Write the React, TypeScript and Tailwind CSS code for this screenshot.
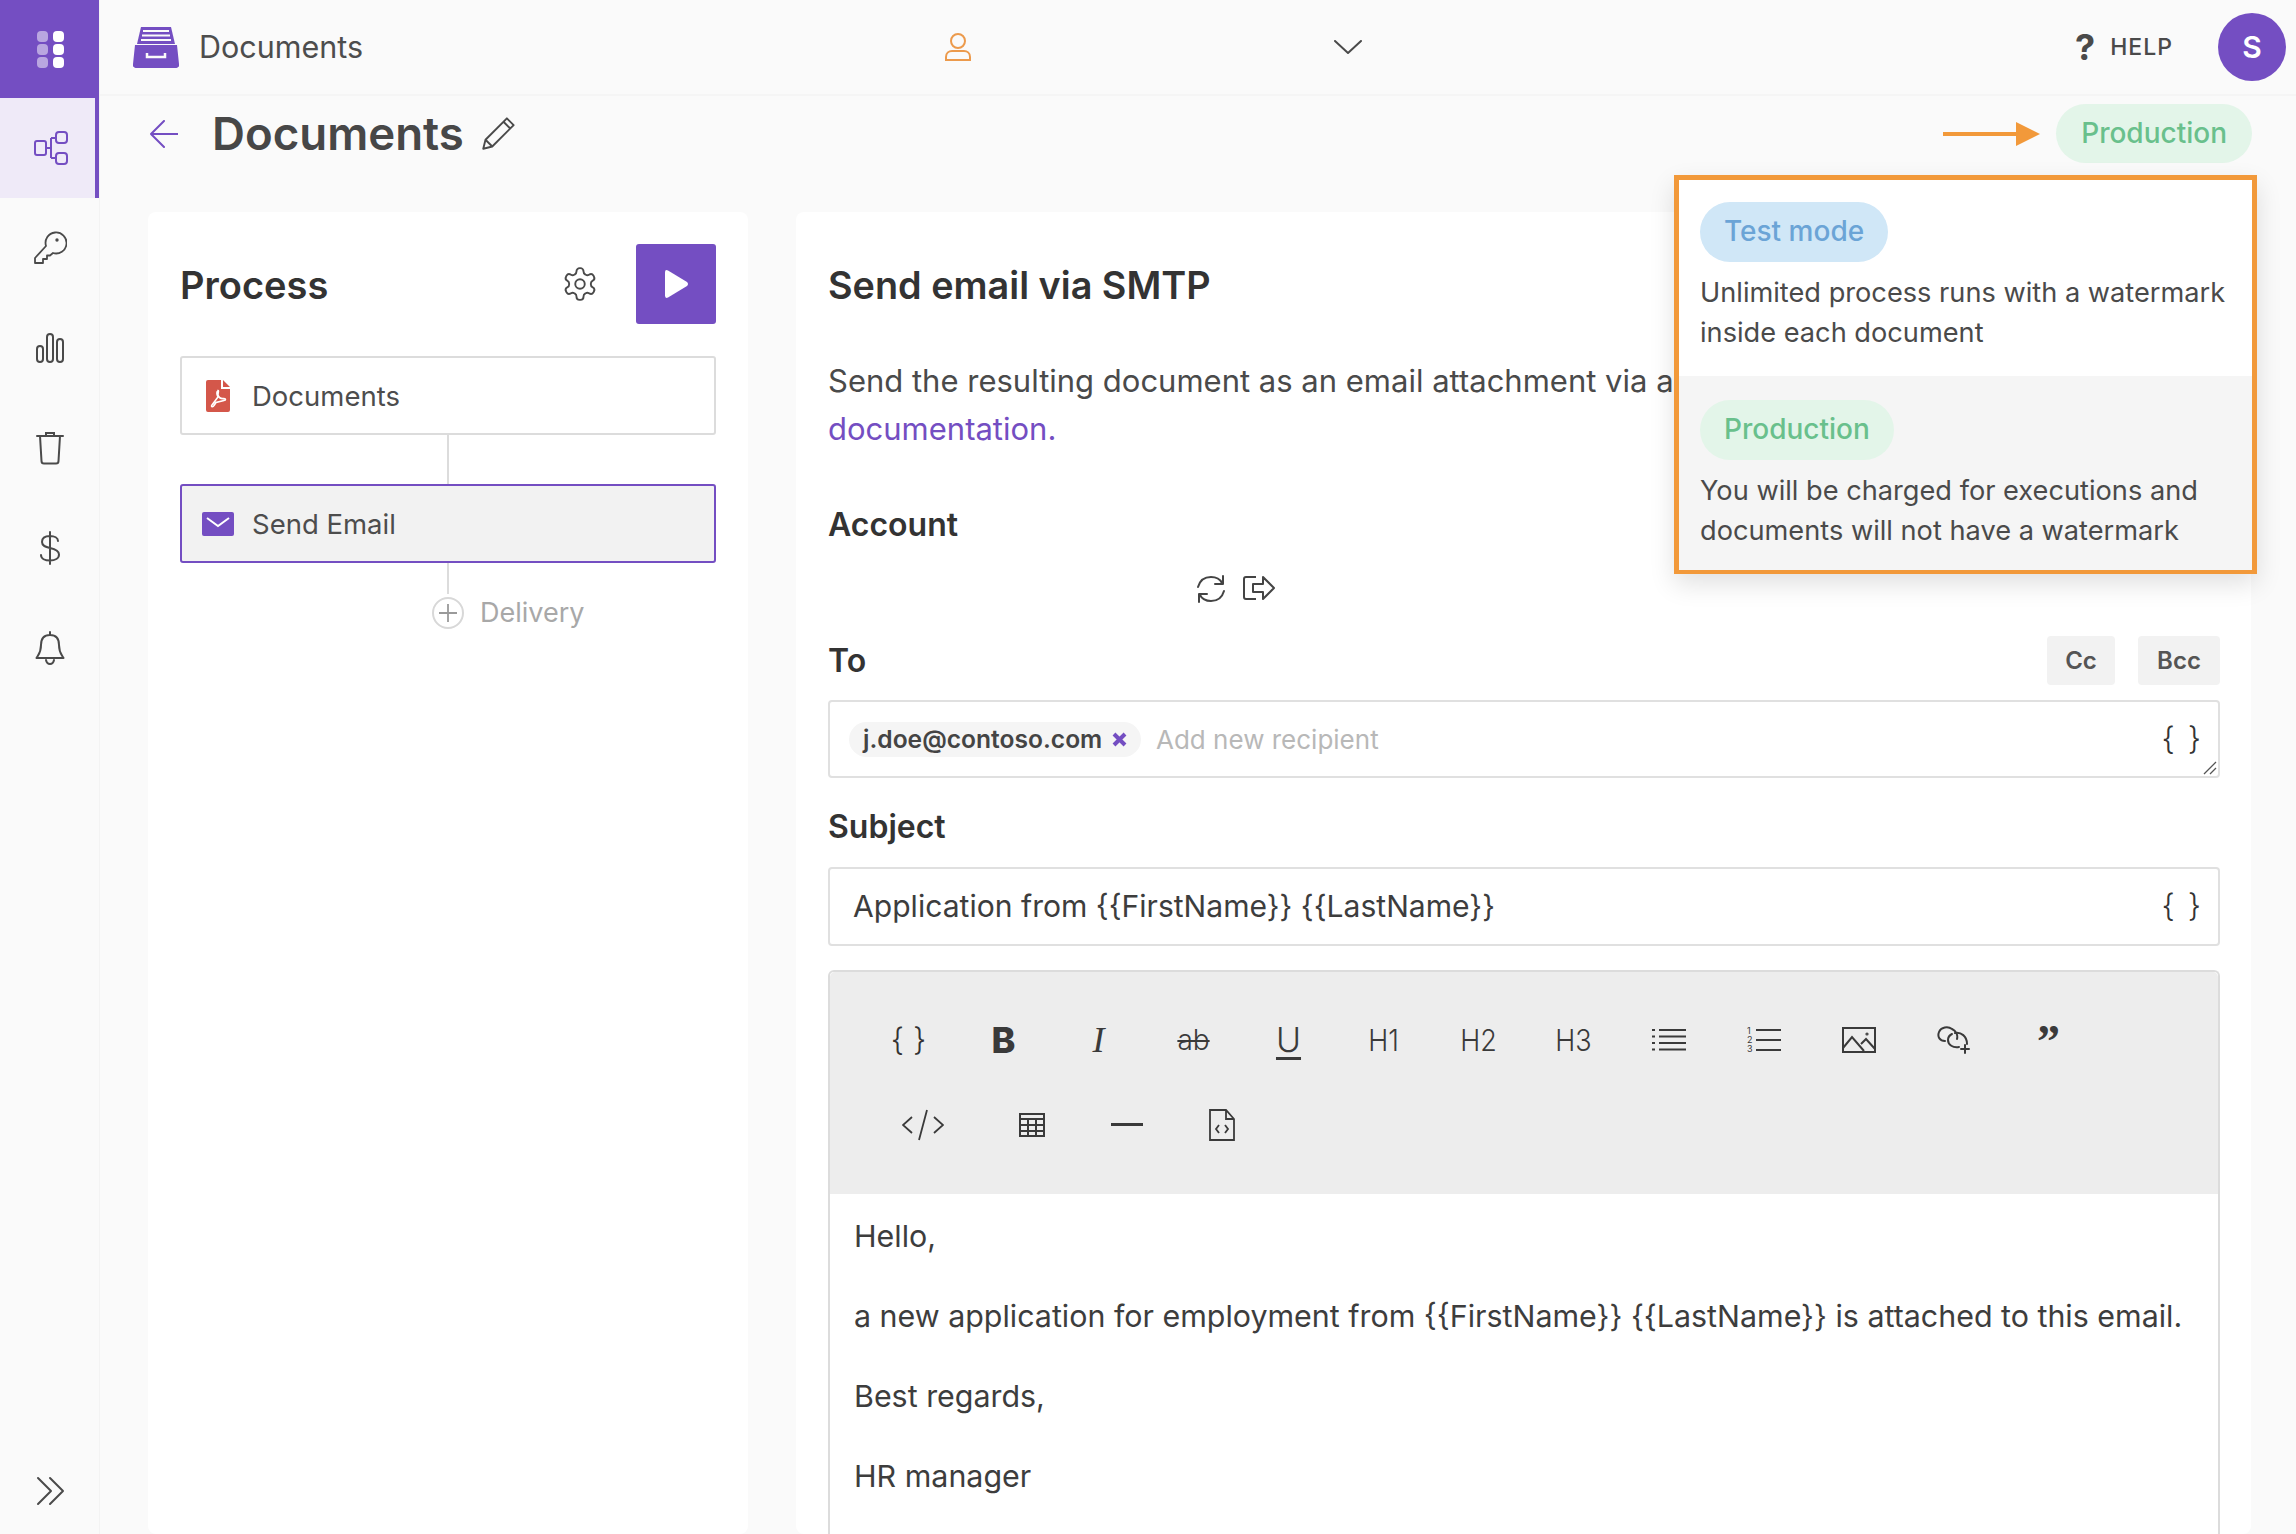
import { ReactNode } from "react";

const PURPLE = "#744ec2";

function Line({ d, size = 32, sw = 2, color = "#4a4a4a", vb = 32 }: { d: string; size?: number; sw?: number; color?: string; vb?: number }) {
  return (
    <svg width={size} height={size} viewBox={`0 0 ${vb} ${vb}`} fill="none" stroke={color} strokeWidth={sw} strokeLinecap="round" strokeLinejoin="round">
      <path d={d} />
    </svg>
  );
}

function Braces({ wide }: { wide?: boolean }) {
  return <span className={`text-[32px] leading-none font-light text-[#333] ${wide ? "tracking-[2px]" : "tracking-[0px]"}`}>{"{ }"}</span>;
}

function SideItem({ children, active }: { children: ReactNode; active?: boolean }) {
  return (
    <div className={`h-[100px] flex items-center justify-center ${active ? "bg-[#efeaf8] border-r-4 border-[#744ec2] pl-[6px]" : ""}`}>
      {children}
    </div>
  );
}

function Sidebar() {
  return (
    <div className="w-[100px] shrink-0 flex flex-col border-r border-[#f3f3f3] bg-[#fafafa] h-full">
      <div className="h-[98px] bg-[#744ec2] grid gap-x-[5px] gap-y-[2px] content-center justify-center pl-[1px]" style={{ gridTemplateColumns: "11px 11px" }}>
        {[0, 1, 2, 3, 4, 5].map((i) => (
          <span key={i} className={`w-[11px] h-[11px] rounded-[4px] ${i % 2 === 0 ? "bg-[#b9a6e0]" : "bg-white"}`} />
        ))}
      </div>
      <SideItem active>
        <svg width="34" height="34" viewBox="0 0 34 34" fill="none" stroke={PURPLE} strokeWidth="2">
          <rect x="1" y="10" width="11" height="14" rx="2" />
          <rect x="22" y="1" width="11" height="11" rx="3" />
          <rect x="22" y="22" width="11" height="11" rx="3" />
          <path d="M12 17h5M17 7v20M17 7h5M17 27h5" />
        </svg>
      </SideItem>
      <SideItem>
        <svg width="34" height="34" viewBox="0 0 34 34" fill="none" stroke="#4a4a4a" strokeWidth="1.8" strokeLinejoin="round">
          <path d="M13 15a10.5 10.5 0 1 1 7 7l-3 2.5h-3v3.5h-4v4H2v-5z" />
          <circle cx="24" cy="9" r="0.8" fill="#4a4a4a" />
        </svg>
      </SideItem>
      <SideItem>
        <svg width="30" height="30" viewBox="0 0 30 30" fill="none" stroke="#4a4a4a" strokeWidth="2">
          <rect x="2" y="13" width="6" height="16" rx="3" />
          <rect x="12" y="1" width="6" height="28" rx="3" />
          <rect x="22" y="6" width="6" height="23" rx="3" />
        </svg>
      </SideItem>
      <SideItem>
        <svg width="28" height="34" viewBox="0 0 28 34" fill="none" stroke="#4a4a4a" strokeWidth="2" strokeLinecap="round">
          <path d="M1 5h26M10 5V2h8v3M4 5l1.5 25a2.5 2.5 0 0 0 2.5 2.5h12a2.500 2.500 0 0 0 2.500-2.500L24 5" />
        </svg>
      </SideItem>
      <SideItem>
        <svg width="22" height="34" viewBox="0 0 22 34" fill="none" stroke="#4a4a4a" strokeWidth="2" strokeLinecap="round">
          <path d="M19 10c0-3-3.500-5-8-5s-8 2-8 6 3.500 5 8 6 9 2.500 9 6.500-4 6-9 6-9-2-9-5.500M11 1v32" />
        </svg>
      </SideItem>
      <SideItem>
        <svg width="30" height="34" viewBox="0 0 30 34" fill="none" stroke="#4a4a4a" strokeWidth="2" strokeLinecap="round" strokeLinejoin="round">
          <path d="M15 1v3M15 4c-6 0-9 4-9 10 0 8-3 10-4.500 13h27c-1.500-3-4.500-5-4.500-13 0-6-3-10-9-10zM11 29c.5 2.500 2 4 4 4s3.500-1.500 4-4" />
        </svg>
      </SideItem>
      <div className="mt-auto h-[60px] flex justify-center pt-[2px] pl-[2px]">
        <Line d="M2 2l13 13L2 28M14 2l13 13-13 13" size={30} sw={2} vb={30} />
      </div>
    </div>
  );
}

function Header() {
  return (
    <div className="h-[96px] shrink-0 flex items-center border-b-2 border-[#f5f5f5] pl-[33px] pr-[10px] relative">
      <svg width="46" height="42" viewBox="0 0 46 42" className="mr-[20px]">
        <path d="M8 1h30l4 17H4z" fill={PURPLE} />
        <path d="M10 5h26M9 9.500h28M8 14h30" stroke="#fafafa" strokeWidth="2" />
        <path d="M2 19h42l2 19a3 3 0 0 1-3 4H3a3 3 0 0 1-3-4z" fill={PURPLE} />
        <path d="M14 27v4h18v-4" stroke="#fafafa" strokeWidth="2.500" fill="none" />
      </svg>
      <span className="text-[30.500px] text-[#4d4d4d]">Documents</span>
      <div className="ml-[581px] w-[30px]">
        <svg width="28" height="30" viewBox="0 0 28 30" fill="none" stroke="#ec9a4c" strokeWidth="2">
          <circle cx="14" cy="9" r="7" />
          <path d="M2 28v-3c0-4 3-6 6-6h12c3 0 6 2 6 6v3z" />
        </svg>
      </div>
      <div className="ml-[360px]">
        <svg width="28" height="14" viewBox="0 0 28 14" fill="none" stroke="#4a4a4a" strokeWidth="2" strokeLinecap="round" strokeLinejoin="round">
          <path d="M1 1l13 12L27 1" />
        </svg>
      </div>
      <div className="ml-auto flex items-center">
        <span className="text-[36px] font-bold text-[#4a4a4a] mr-[15px] leading-none">?</span>
        <span className="text-[23px] font-medium tracking-[1px] text-[#4a4a4a] mr-[45px]">HELP</span>
        <div className="w-[68px] h-[68px] rounded-full bg-[#744ec2] flex items-center justify-center text-white text-[30px] font-semibold">S</div>
      </div>
    </div>
  );
}

function Step({ icon, label, active }: { icon: ReactNode; label: string; active?: boolean }) {
  return (
    <div className={`h-[79px] flex items-center rounded-[3px] border-2 ${active ? "border-[#744ec2] bg-[#f2f2f2]" : "border-[#dcdcdc] bg-white"}`}>
      <span className="w-[70px] flex justify-center pl-[2px]">{icon}</span>
      <span className="text-[27.500px] text-[#4d4d4d] pt-[2px]">{label}</span>
    </div>
  );
}

function ProcessCard() {
  return (
    <div className="w-[600px] bg-white rounded-[8px] px-[32px] pt-[32px]">
      <div className="flex items-center h-[80px] mb-[32px]">
        <h2 className="text-[38px] font-semibold text-[#333] pt-[2px]">Process</h2>
        <div className="ml-auto mr-[37px]">
          <svg width="38" height="38" viewBox="0 0 24 24" fill="none" stroke="#4a4a4a" strokeWidth="1.200" strokeLinejoin="round">
            <path d="M12.220 2h-.440a2 2 0 0 0-2 2v.180a2 2 0 0 1-1 1.730l-.430.250a2 2 0 0 1-2 0l-.150-.080a2 2 0 0 0-2.730.730l-.220.380a2 2 0 0 0 .730 2.730l.150.100a2 2 0 0 1 1 1.720v.510a2 2 0 0 1-1 1.740l-.150.090a2 2 0 0 0-.730 2.730l.220.380a2 2 0 0 0 2.730.730l.150-.080a2 2 0 0 1 2 0l.430.250a2 2 0 0 1 1 1.730V20a2 2 0 0 0 2 2h.440a2 2 0 0 0 2-2v-.180a2 2 0 0 1 1-1.730l.430-.250a2 2 0 0 1 2 0l.150.080a2 2 0 0 0 2.730-.730l.220-.390a2 2 0 0 0-.730-2.730l-.150-.080a2 2 0 0 1-1-1.740v-.500a2 2 0 0 1 1-1.740l.150-.090a2 2 0 0 0 .730-2.730l-.220-.380a2 2 0 0 0-2.730-.730l-.150.080a2 2 0 0 1-2 0l-.430-.250a2 2 0 0 1-1-1.730V4a2 2 0 0 0-2-2z" />
            <circle cx="12" cy="12" r="3" />
          </svg>
        </div>
        <button className="w-[80px] h-[80px] bg-[#744ec2] rounded-[3px] flex items-center justify-center">
          <svg width="26" height="30" viewBox="0 0 26 30"><path d="M2 3.500Q2 0 5 1.500L24 13q2 2 0 4L5 28.500Q2 30 2 26.500z" fill="white" /></svg>
        </button>
      </div>
      <Step
        label="Documents"
        icon={
          <svg width="24" height="32" viewBox="0 0 24 32">
            <path d="M2 0h13v9h9v21a2 2 0 0 1-2 2H2a2 2 0 0 1-2-2V2a2 2 0 0 1 2-2zM17 0l7 7h-7z" fill="#d4574a" />
            <path d="M12 11c-1.500 0-1.500 3 0 6l-6 8c-1.500 2 1 2.500 2 .5l2-3 8-2c2 0 2-2 0-2-3 .5-5-.5-6-3.500 0-2.500 1-4.500 0-4.500z" fill="none" stroke="white" strokeWidth="1.600" />
          </svg>
        }
      />
      <div className="w-[2px] h-[49px] bg-[#dcdcdc] ml-[267px]" />
      <Step
        active
        label="Send Email"
        icon={
          <svg width="32" height="24" viewBox="0 0 32 24">
            <rect width="32" height="24" rx="2" fill={PURPLE} />
            <path d="M5 6l11 8 11-8" fill="none" stroke="white" strokeWidth="2" />
          </svg>
        }
      />
      <div className="w-[2px] h-[31px] bg-[#dcdcdc] ml-[267px]" />
      <div className="flex items-center ml-[252px] -mt-[1px]">
        <span className="w-[32px] h-[32px] rounded-full border-2 border-[#d8d8d8] flex items-center justify-center">
          <svg width="20" height="20" viewBox="0 0 20 20" stroke="#9a9a9a" strokeWidth="1.800"><path d="M10 1v18M1 10h18" /></svg>
        </span>
        <span className="ml-[16px] text-[27px] text-[#a8a8a8]">Delivery</span>
      </div>
    </div>
  );
}

function InputField({ children, h }: { children: ReactNode; h: string }) {
  return <div className={`${h} relative flex items-center border-2 border-[#e0e0e0] rounded-[4px] bg-white`}>{children}</div>;
}

function ToolBtn({ children, w = "w-[95px]" }: { children: ReactNode; w?: string }) {
  return <div className={`${w} h-[85px] flex items-center justify-center text-[#3a3a3a]`}>{children}</div>;
}

function Heading({ children }: { children: string }) {
  return <span className="inline-block text-[27px] font-light mt-[3px] scale-y-[1.12]">{children}</span>;
}

function Toolbar() {
  return (
    <div className="h-[222px] bg-[#ededed] pt-[25px] pl-[31px] rounded-t-[5px]">
      <div className="flex">
        <ToolBtn><Braces /></ToolBtn>
        <ToolBtn><span className="text-[36px] font-extrabold leading-none">B</span></ToolBtn>
        <ToolBtn><span className="text-[36px] italic font-light leading-none [font-family:'Liberation_Serif',serif]">I</span></ToolBtn>
        <ToolBtn><span className="text-[28px] line-through font-light leading-none">ab</span></ToolBtn>
        <ToolBtn><span className="text-[34px] underline underline-offset-[5px] font-light leading-none">U</span></ToolBtn>
        <ToolBtn><Heading>H1</Heading></ToolBtn>
        <ToolBtn><Heading>H2</Heading></ToolBtn>
        <ToolBtn><Heading>H3</Heading></ToolBtn>
        <ToolBtn>
          <svg width="34" height="24" viewBox="0 0 34 24" stroke="#3a3a3a" strokeWidth="2">
            <path d="M7 2h27M7 8.500h27M7 15h27M7 21.500h27M0 2h3M0 8.500h3M0 15h3M0 21.500h3" />
          </svg>
        </ToolBtn>
        <ToolBtn>
          <svg width="34" height="28" viewBox="0 0 34 28" stroke="#3a3a3a" strokeWidth="2">
            <path d="M9 4h25M9 14h25M9 24h25" />
            <text x="0" y="8" fontSize="9" fill="#3a3a3a" stroke="none">1</text>
            <text x="0" y="17" fontSize="9" fill="#3a3a3a" stroke="none">2</text>
            <text x="0" y="26" fontSize="9" fill="#3a3a3a" stroke="none">3</text>
          </svg>
        </ToolBtn>
        <ToolBtn>
          <svg width="34" height="26" viewBox="0 0 34 26" fill="none" stroke="#3a3a3a" strokeWidth="2">
            <rect x="1" y="1" width="32" height="24" />
            <path d="M1 21l9-11 12 14M19 17l5-5 9 10" />
            <circle cx="25" cy="7" r="0.600" />
          </svg>
        </ToolBtn>
        <ToolBtn>
          <svg width="34" height="28" viewBox="0 0 34 28" fill="none" stroke="#3a3a3a" strokeWidth="2" strokeLinecap="round">
            <path d="M8 15C3 15 0 11 2 6 4 1 11 0 15 3c4 2 6 6 5 10" />
            <path d="M18 7c6-1 12 3 12 11M22 21c-6 1-11-2-11-7 0-3 2-5 4-6" />
            <path d="M28 19v8M24 23h8" />
          </svg>
        </ToolBtn>
        <ToolBtn><span className="text-[46px] font-bold leading-none -mt-[2px] [font-family:'Liberation_Serif',serif] h-[40px]">”</span></ToolBtn>
      </div>
      <div className="flex">
        <ToolBtn w="w-[123px]">
          <svg width="42" height="32" viewBox="0 0 42 32" fill="none" stroke="#3a3a3a" strokeWidth="1.800">
            <path d="M10 8L1 16l9 8M32 8l9 8-9 8M25 1l-8 30" />
          </svg>
        </ToolBtn>
        <ToolBtn>
          <svg width="26" height="24" viewBox="0 0 26 24" fill="none" stroke="#3a3a3a" strokeWidth="2">
            <rect x="1" y="1" width="24" height="22" />
            <path d="M1 6h24M1 12h24M1 18h24M9 6v17M17 6v17" />
          </svg>
        </ToolBtn>
        <ToolBtn><span className="block w-[32px] h-[3px] bg-[#3a3a3a]" /></ToolBtn>
        <ToolBtn>
          <svg width="26" height="32" viewBox="0 0 26 32" fill="none" stroke="#3a3a3a" strokeWidth="1.800">
            <path d="M1 1h16l8 9v21H1zM17 1v9h8M10 16l-3 4 3 4M16 16l3 4-3 4" />
          </svg>
        </ToolBtn>
      </div>
    </div>
  );
}

function EmailCard() {
  return (
    <div className="w-[1455px] bg-white rounded-[8px] pl-[32px] pr-[31px] pt-[32px] flex flex-col">
      <h2 className="h-[80px] pt-[2px] flex items-center text-[37.800px] font-semibold text-[#333] whitespace-nowrap">Send email via SMTP</h2>
      <p className="mt-[33px] text-[31px] leading-[48px] text-[#4a4a4a] whitespace-nowrap">
        Send the resulting document as an email attachment via an SMTP server. See the
        <br />
        <span className="text-[#744ec2]">documentation.</span>
      </p>
      <div className="mt-[48px] text-[32px] font-semibold text-[#333] leading-[48px]">Account</div>
      <div className="h-[87px] flex items-start pl-[367px] pt-[25px] gap-[16px]">
        <svg width="32" height="30" viewBox="0 0 32 30" fill="none" stroke="#444" strokeWidth="2" strokeLinecap="round" strokeLinejoin="round">
          <path d="M3 13C5 6 10 3 16 3c5 0 9 2 11 6M28 2v8h-8M29 17c-2 7-7 10-13 10-5 0-9-2-11-6M4 28v-8h8" />
        </svg>
        <svg width="32" height="28" viewBox="0 0 32 28" fill="none" stroke="#444" strokeWidth="2" strokeLinejoin="round">
          <path d="M13 3H3a2 2 0 0 0-2 2v18a2 2 0 0 0 2 2h10M10 10h10V3l11 11-11 11v-7H10z" />
        </svg>
      </div>
      <div className="flex items-center h-[49px]">
        <span className="text-[32px] font-semibold text-[#333]">To</span>
        <div className="ml-auto flex gap-[23px] text-[24px] font-semibold text-[#555]">
          <span className="w-[68px] h-[49px] bg-[#f2f2f2] rounded-[4px] flex items-center justify-center">Cc</span>
          <span className="w-[82px] h-[49px] bg-[#f2f2f2] rounded-[4px] flex items-center justify-center">Bcc</span>
        </div>
      </div>
      <div className="mt-[15px]">
        <InputField h="h-[78px]">
          <span className="ml-[19px] h-[35px] w-[292px] pl-[14px] rounded-full bg-[#f5f5f5] flex items-center text-[24.600px] font-semibold text-[#444]">
            j.doe@contoso.com
            <svg width="15" height="15" viewBox="0 0 15 15" className="ml-[10px]" stroke={PURPLE} strokeWidth="4"><path d="M2 2l11 11M13 2L2 13" /></svg>
          </span>
          <span className="ml-[15px] text-[26px] text-[#b8b8b8]">Add new recipient</span>
          <span className="ml-auto mr-[15px]"><Braces wide /></span>
          <svg width="14" height="14" viewBox="0 0 14 14" className="absolute right-[1px] bottom-[1px]" stroke="#555" strokeWidth="1.300"><path d="M1 13L13 1M7 13l6-6" /></svg>
        </InputField>
      </div>
      <div className="mt-[29px] text-[32px] font-semibold text-[#333] leading-[40px]">Subject</div>
      <div className="mt-[20px]">
        <InputField h="h-[79px]">
          <span className="ml-[23px] text-[30.100px] text-[#3d3d3d]">Application from {"{{FirstName}} {{LastName}}"}</span>
          <span className="ml-auto mr-[15px]"><Braces wide /></span>
        </InputField>
      </div>
      <div className="mt-[24px] flex-1 border-2 border-b-0 border-[#dcdcdc] rounded-t-[6px]">
        <Toolbar />
        <div className="pl-[24px] pt-[18px] text-[30.400px] leading-[48px] text-[#3d3d3d] flex flex-col gap-[32px] whitespace-nowrap">
          <p>Hello,</p>
          <p>a new application for employment from {"{{FirstName}} {{LastName}}"} is attached to this email.</p>
          <p>Best regards,</p>
          <p>HR manager</p>
        </div>
      </div>
    </div>
  );
}

function Popover() {
  return (
    <div className="absolute left-[1674px] top-[175px] w-[583px] h-[399px] border-[5px] border-[#f2993a] bg-white shadow-[0_10px_24px_rgba(0,0,0,0.12)] text-[27.200px] leading-[39.500px] text-[#4a4a4a]">
      <div className="h-[196px] pt-[22px] pl-[21px]">
        <span className="inline-flex items-center h-[60px] px-[24px] rounded-full bg-[#d0e7f7] text-[#6ba4d6] font-medium text-[28px]">Test mode</span>
        <p className="mt-[11px] whitespace-nowrap">Unlimited process runs with a watermark<br />inside each document</p>
      </div>
      <div className="h-[194px] bg-[#f5f5f5] pt-[24px] pl-[21px]">
        <span className="inline-flex items-center h-[60px] px-[24px] rounded-full bg-[#e3f5e9] text-[#69c08c] font-medium text-[28px]">Production</span>
        <p className="mt-[11px] whitespace-nowrap">You will be charged for executions and<br />documents will not have a watermark</p>
      </div>
    </div>
  );
}

export default function App() {
  return (
    <div className="relative w-[2296px] h-[1534px] overflow-hidden flex bg-[#fafafa] [font-family:Inter,sans-serif]">
      <Sidebar />
      <div className="flex-1 flex flex-col min-w-0">
        <Header />
        <div className="h-[116px] shrink-0 flex items-center pl-[50px] pr-[44px] pb-[46px] pt-[6px]">
          <Line d="M14 1L1 14l13 13M1 14h27" size={28} sw={2} color={PURPLE} vb={28} />
          <h1 className="ml-[34px] text-[45.600px] font-semibold text-[#474747] leading-none">Documents</h1>
          <svg width="36" height="36" viewBox="0 0 32 32" className="ml-[17px] -mt-[2px]" fill="none" stroke="#4a4a4a" strokeWidth="1.700" strokeLinejoin="round">
            <path d="M23 3l6 6L10 28l-8 2 2-8zM20 6l6 6M4 22l6 6" />
          </svg>
          <div className="ml-auto flex items-center">
            <svg width="97" height="24" viewBox="0 0 97 24" className="mr-[16px]">
              <path d="M0 10h73V0l24 12-24 12V14H0z" fill="#f2993a" />
            </svg>
            <span className="inline-flex items-center h-[59px] -mt-[2px] px-[25px] rounded-full bg-[#e3f5e9] text-[#69c08c] text-[28px] font-medium">Production</span>
          </div>
        </div>
        <div className="flex-1 flex pl-[48px] gap-[48px] min-h-0">
          <ProcessCard />
          <EmailCard />
        </div>
      </div>
      <Popover />
    </div>
  );
}
